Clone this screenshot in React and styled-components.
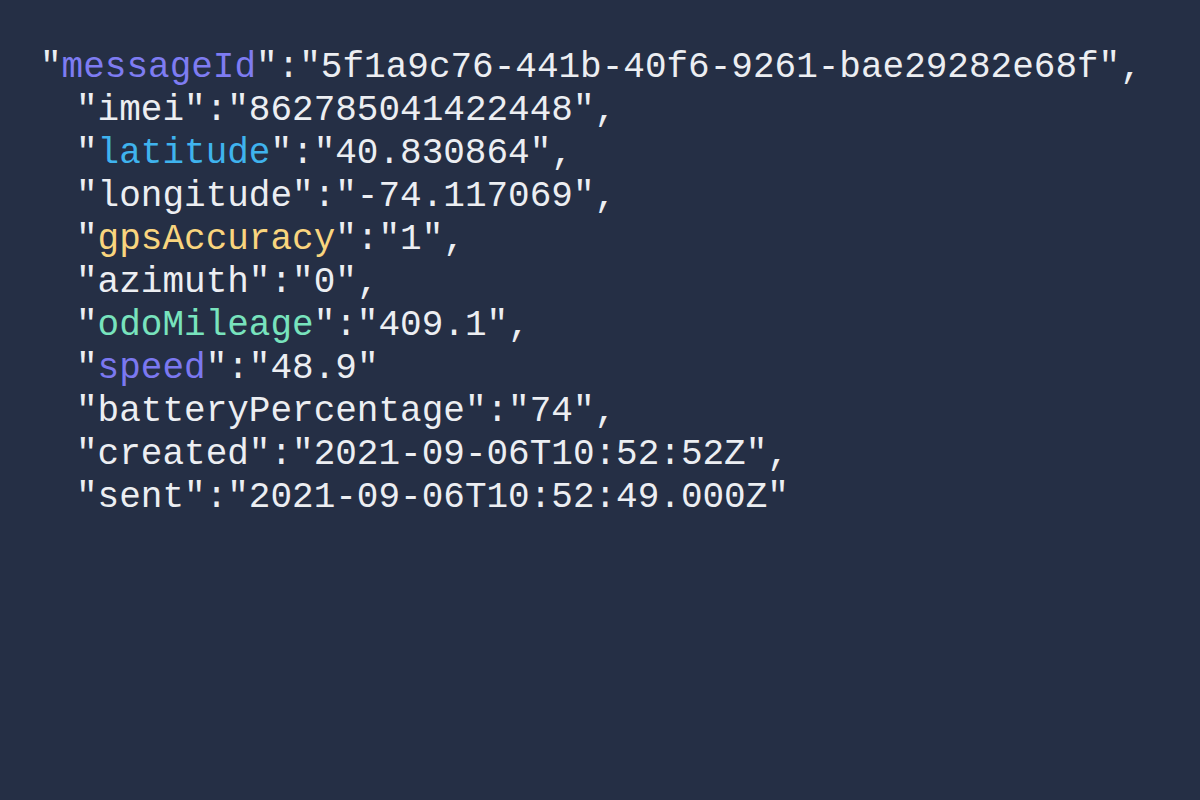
import React from "react";
import styled, { createGlobalStyle } from "styled-components";

const GlobalStyle = createGlobalStyle`
  html, body {
    margin: 0;
    padding: 0;
    background: #252f45;
  }
`;

const lines = [
  { key: "messageId", value: "5f1a9c76-441b-40f6-9261-bae29282e68f", color: "#7e7cf2", comma: true, first: true },
  { key: "imei", value: "862785041422448", comma: true },
  { key: "latitude", value: "40.830864", color: "#3fb3ee", comma: true },
  { key: "longitude", value: "-74.117069", comma: true },
  { key: "gpsAccuracy", value: "1", color: "#f9d57e", comma: true },
  { key: "azimuth", value: "0", comma: true },
  { key: "odoMileage", value: "409.1", color: "#78e3bd", comma: true },
  { key: "speed", value: "48.9", color: "#7b78f0" },
  { key: "batteryPercentage", value: "74", comma: true },
  { key: "created", value: "2021-09-06T10:52:52Z", comma: true },
  { key: "sent", value: "2021-09-06T10:52:49.000Z" },
];

function App() {
  return (
    <Screen>
      <GlobalStyle />
      <Code>
        {lines.map((l) => (
          <Line key={l.key} $indent={!l.first}>
            "<Key $color={l.color}>{l.key}</Key>":"{l.value}"{l.comma ? "," : ""}
          </Line>
        ))}
      </Code>
    </Screen>
  );
}

export default App;

const Screen = styled.div`
  width: 1200px;
  height: 800px;
  background: #252f45;
  box-sizing: border-box;
  padding: 46px 0 0 40px;
`;

const Code = styled.div`
  font-family: "Courier New", "Nimbus Mono PS", "FreeMono", "Liberation Mono", monospace;
  font-size: 36px;
  line-height: 43px;
  color: #eceef2;
  white-space: pre;
`;

const Line = styled.div`
  padding-left: ${(p) => (p.$indent ? "36px" : "0")};
`;

const Key = styled.span`
  color: ${(p) => p.$color || "inherit"};
`;
